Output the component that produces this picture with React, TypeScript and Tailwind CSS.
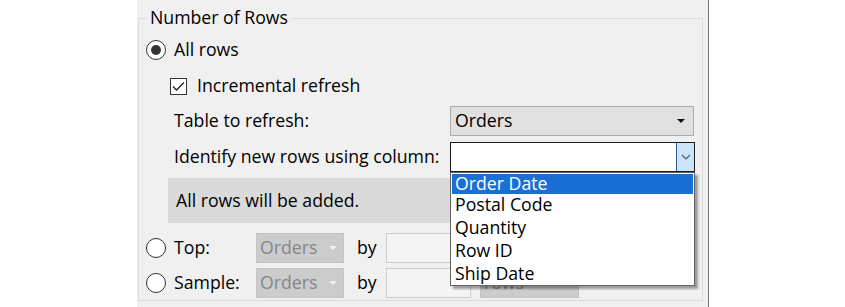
import React from "react";

const font = { fontFamily: '"Open Sans", "Noto Sans", sans-serif' };

function Radio({ checked }: { checked?: boolean }) {
  return (
    <div className="w-[20px] h-[20px] rounded-full border border-[#333333] bg-white flex items-center justify-center shrink-0">
      {checked && <div className="w-[10px] h-[10px] rounded-full bg-[#333333]" />}
    </div>
  );
}

function DisabledSelect({ text, w }: { text: string; w: string }) {
  return (
    <div className={`h-[30px] ${w} bg-[#cccccc] border border-[#c4c4c4] flex items-center pl-[3px] pr-[6px] text-[#858585]`}>
      <span className="flex-1">{text}</span>
      <svg width="8" height="5" viewBox="0 0 8 5"><path d="M0 0 L8 0 L4 4 Z" fill="#f2f2f2" /></svg>
    </div>
  );
}

export default function App() {
  return (
    <div className="w-[845px] h-[307px] bg-white flex text-[17.7px] text-black leading-none" style={font}>
      <div className="ml-[137px] w-[572px] h-[307px] bg-[#f0f0f0] border-r border-[#777777] pl-[1px]">
        <div className="relative mt-[18px] w-[565px] h-[283px] border border-[#dcdcdc] flex flex-col">
          <div className="absolute left-[8px] top-[-13px] px-[3px] bg-[#f0f0f0] h-[24px] flex items-center">Number of Rows</div>

          <div className="mt-[18px] h-[26px] flex items-center pl-[7px] gap-[8px]">
            <Radio checked />
            <span>All rows</span>
          </div>

          <div className="mt-[10px] h-[26px] flex items-center pl-[31px] gap-[10px]">
            <div className="w-[17px] h-[17px] border border-[#333333] bg-white flex items-center justify-center">
              <svg width="13" height="11" viewBox="0 0 13 11"><path d="M1 5.5 L4.5 9 L12 1.5" stroke="#222" strokeWidth="1.3" fill="none" /></svg>
            </div>
            <span>Incremental refresh</span>
          </div>

          <div className="mt-[7px] h-[30px] flex items-center pl-[35px]">
            <span className="w-[276px]">Table to refresh:</span>
            <div className="h-[30px] w-[244px] bg-[#e1e1e1] border border-[#adadad] flex items-center pl-[4px] pr-[8px]">
              <span className="flex-1">Orders</span>
              <svg width="8" height="5" viewBox="0 0 8 5"><path d="M0 0 L8 0 L4 4 Z" fill="#111" /></svg>
            </div>
          </div>

          <div className="mt-[6px] h-[30px] flex items-center pl-[35px] relative">
            <span className="w-[276px]">Identify new rows using column:</span>
            <div className="h-[30px] w-[245px] bg-white border border-[#1a1a1a] flex justify-end">
              <div className="w-[18px] h-full bg-[#cce4f7] border-l border-[#2a5a9a] flex items-center justify-center">
                <svg width="10" height="6" viewBox="0 0 10 6"><path d="M1 1 L5 5 L9 1" stroke="#3c5a78" strokeWidth="1.1" fill="none" /></svg>
              </div>
            </div>
            <div className="absolute left-[311px] top-[30px] w-[245px] h-[114px] bg-white border border-[#646464] shadow-[3px_3px_2px_rgba(0,0,0,0.35)] z-10 flex flex-col pt-[1px]">
              <div className="h-[20px] mx-[1px] bg-[#1a6fd6] text-white flex items-center pl-[3px]">Order Date</div>
              <div className="h-[23px] flex items-center pl-[4px]">Postal Code</div>
              <div className="h-[23px] flex items-center pl-[4px]">Quantity</div>
              <div className="h-[23px] flex items-center pl-[4px]">Row ID</div>
              <div className="h-[23px] flex items-center pl-[4px]">Ship Date</div>
            </div>
          </div>

          <div className="mt-[6px] ml-[29px] w-[526px] h-[45px] bg-[#dadada] flex items-center pl-[8px]">All rows will be added.</div>

          <div className="mt-[10px] h-[30px] flex items-center pl-[7px]">
            <Radio />
            <span className="ml-[8px] w-[82px]">Top:</span>
            <DisabledSelect text="Orders" w="w-[88px]" />
            <span className="ml-[13px] w-[29px]">by</span>
            <div className="h-[30px] w-[85px] bg-[#f4f4f4] border border-[#cccccc]" />
            <div className="ml-[9px]"><DisabledSelect text="" w="w-[99px]" /></div>
          </div>

          <div className="mt-[5px] h-[30px] flex items-center pl-[7px]">
            <Radio />
            <span className="ml-[8px] w-[82px]">Sample:</span>
            <DisabledSelect text="Orders" w="w-[88px]" />
            <span className="ml-[13px] w-[29px]">by</span>
            <div className="h-[30px] w-[85px] bg-[#f4f4f4] border border-[#cccccc]" />
            <div className="ml-[9px]"><DisabledSelect text="rows" w="w-[99px]" /></div>
          </div>
        </div>
      </div>
    </div>
  );
}
